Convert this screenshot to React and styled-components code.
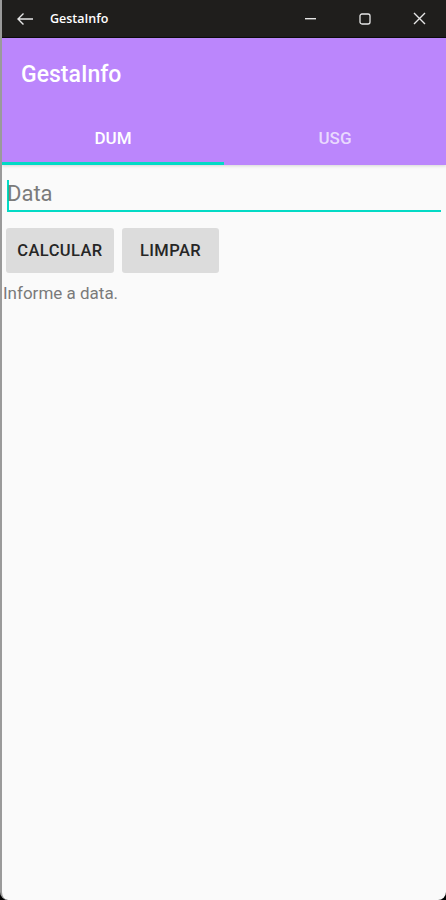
import React, { useState } from "react";
import styled, { createGlobalStyle } from "styled-components";

const GlobalStyle = createGlobalStyle`
  html, body {
    margin: 0;
    padding: 0;
    background: #000;
  }
  * {
    box-sizing: border-box;
  }
`;

const Window = styled.div`
  width: 446px;
  height: 900px;
  display: flex;
  flex-direction: column;
  background: #fafafa;
  border-left: 2px solid #9a9a9a;
  border-radius: 0 0 8px 8px;
  overflow: hidden;
  font-family: Roboto, "Liberation Sans", sans-serif;
`;

const TitleBar = styled.div`
  height: 38px;
  flex-shrink: 0;
  display: flex;
  align-items: center;
  background: #1f1e1c;
  border-bottom: 1px solid #0c0c0c;
  color: #fff;
`;

const BackButton = styled.div`
  width: 46px;
  display: flex;
  justify-content: center;
`;

const WindowTitle = styled.span`
  flex: 1;
  font-family: "Open Sans", "Liberation Sans", sans-serif;
  font-size: 12.5px;
  font-weight: 600;
  padding-left: 2px;
`;

const Control = styled.div`
  width: 54px;
  height: 100%;
  display: flex;
  align-items: center;
  justify-content: center;
`;

const Header = styled.div`
  background: #bb86fc;
  display: flex;
  flex-direction: column;
  box-shadow: 0 1px 3px rgba(0, 0, 0, 0.15);
`;

const AppTitle = styled.h1`
  margin: 0;
  height: 73px;
  display: flex;
  align-items: center;
  padding-left: 19px;
  color: #fff;
  font-size: 23px;
  font-weight: 500;
`;

const Tabs = styled.div`
  display: flex;
  height: 54px;
`;

const Tab = styled.div`
  flex: 1;
  display: flex;
  align-items: center;
  justify-content: center;
  font-size: 17px;
  font-weight: 500;
  color: ${(p) => (p.$active ? "#ffffff" : "rgba(255, 255, 255, 0.7)")};
  border-bottom: 3px solid ${(p) => (p.$active ? "#03dac5" : "transparent")};
  padding-top: 3px;
`;

const Content = styled.div`
  flex: 1;
  display: flex;
  flex-direction: column;
  padding: 12px 5px 0 3px;
`;

const Field = styled.div`
  display: flex;
  align-items: center;
  margin-left: 2px;
  height: 35px;
  border-bottom: 2px solid #03dac5;
`;

const Caret = styled.span`
  width: 2px;
  height: 30px;
  background: #03dac5;
  margin-top: 2px;
`;

const Input = styled.input`
  flex: 1;
  border: none;
  outline: none;
  background: transparent;
  font-family: Roboto, "Liberation Sans", sans-serif;
  font-size: 22px;
  color: #222;
  padding: 0;
  margin-left: -2px;
  &::placeholder {
    color: #7b7b7b;
  }
`;

const ButtonRow = styled.div`
  display: flex;
  gap: 8px;
  margin-top: 16px;
  padding-left: 1px;
`;

const Button = styled.button`
  height: 45px;
  width: ${(p) => p.$width}px;
  padding: 0;
  border: none;
  border-radius: 3px;
  background: #dcdcdc;
  color: #262626;
  font-family: Roboto, "Liberation Sans", sans-serif;
  font-size: 16.5px;
  font-weight: 500;
  letter-spacing: 0.4px;
`;

const Message = styled.p`
  margin: 10px 0 0 -2px;
  color: #7a7a7a;
  font-size: 17px;
`;

const App = () => {
  const [date, setDate] = useState("");

  return (
    <>
      <GlobalStyle />
      <Window>
        <TitleBar>
          <BackButton>
            <svg width="18" height="14" viewBox="0 0 18 14" fill="none" stroke="#e6e6e6" strokeWidth="1.4">
              <path d="M17 7H2M7.5 1.5L2 7l5.5 5.5" />
            </svg>
          </BackButton>
          <WindowTitle>GestaInfo</WindowTitle>
          <Control>
            <svg width="12" height="2" viewBox="0 0 12 2">
              <rect width="11" height="1.4" fill="#e6e6e6" />
            </svg>
          </Control>
          <Control>
            <svg width="12" height="12" viewBox="0 0 12 12" fill="none" stroke="#e6e6e6" strokeWidth="1.3">
              <rect x="1" y="1" width="10" height="10" rx="2" />
            </svg>
          </Control>
          <Control>
            <svg width="13" height="13" viewBox="0 0 13 13" fill="none" stroke="#e6e6e6" strokeWidth="1.4">
              <path d="M1 1l11 11M12 1L1 12" />
            </svg>
          </Control>
        </TitleBar>
        <Header>
          <AppTitle>GestaInfo</AppTitle>
          <Tabs>
            <Tab $active>DUM</Tab>
            <Tab>USG</Tab>
          </Tabs>
        </Header>
        <Content>
          <Field>
            <Caret />
            <Input
              placeholder="Data"
              value={date}
              onChange={(e) => setDate(e.target.value)}
            />
          </Field>
          <ButtonRow>
            <Button $width={108}>CALCULAR</Button>
            <Button $width={97}>LIMPAR</Button>
          </ButtonRow>
          <Message>Informe a data.</Message>
        </Content>
      </Window>
    </>
  );
};

export default App;
